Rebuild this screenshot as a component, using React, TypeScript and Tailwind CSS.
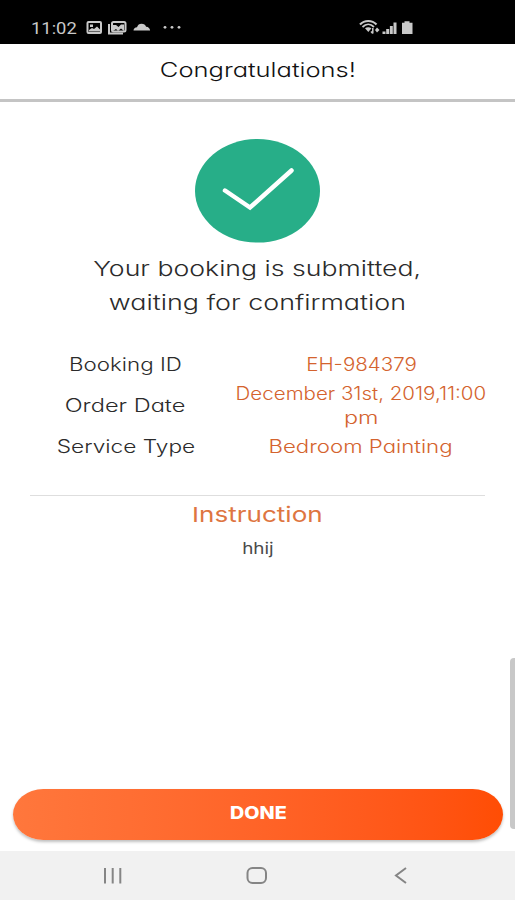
import clsx from "clsx";
import type { ReactNode } from "react";

const details = [
    {
        label: "Booking ID",
        labelClass: "scale-x-[1.24]",
        rowClass: "h-[34px]",
        value: [{ text: "EH-984379", className: "scale-x-[1.14]" }],
    },
    {
        label: "Order Date",
        labelClass: "scale-x-[1.31]",
        rowClass: "h-12",
        value: [
            { text: "December 31st, 2019,11:00", className: "scale-x-[1.14]" },
            { text: "pm", className: "scale-x-[1.3]" },
        ],
    },
    {
        label: "Service Type",
        labelClass: "scale-x-[1.26]",
        rowClass: "h-[34px]",
        value: [{ text: "Bedroom Painting", className: "scale-x-[1.235]" }],
    },
];

const Wide = ({
    className,
    children,
}: {
    className?: string;
    children: ReactNode;
}) => (
    <span className={clsx("inline-block whitespace-nowrap", className)}>
        {children}
    </span>
);

const StatusBar = () => (
    <div className="flex h-11 items-start bg-black pt-[18px] pl-[31px] text-[#c9c9c9]">
        <span className="w-[55px] font-[Roboto] text-[17px] leading-5 font-normal">
            <Wide className="origin-left scale-x-[1.08]">11:02</Wide>
        </span>
        <svg
            className="mt-[3px]"
            width="96"
            height="14"
            viewBox="0 0 96 14"
            fill="none"
            stroke="currentColor"
        >
            <rect x="1.500" y="1" width="13.500" height="11" rx="1" strokeWidth="2" />
            <path d="M3 10.500V9l3-2 2 1L11 5.500l3 3v2z" fill="currentColor" stroke="none" />
            <path d="M4 3.500h3v2.500H4z" fill="currentColor" stroke="none" />
            <path d="M23 3v9.500h14" strokeWidth="2" />
            <rect x="26" y="1" width="13.500" height="9.500" rx="1.500" strokeWidth="2" />
            <path
                d="M27 10V4h3l2.500 2L35 3.500h3V10l-3-2.500-3 2.500-2-2z"
                fill="currentColor"
                stroke="none"
            />
            <path
                d="M47.500 9.500c0-2 1.500-3 3.500-3.200.8-2.500 2.300-3.600 4.500-3.600 2.400 0 4 1.300 4.600 3 2.300-.1 3.800 1.700 4 3.800z"
                fill="currentColor"
                stroke="none"
            />
            <g fill="currentColor" stroke="none">
                <circle cx="79" cy="6.300" r="1.400" />
                <circle cx="86" cy="6.300" r="1.400" />
                <circle cx="93" cy="6.300" r="1.400" />
            </g>
        </svg>
        <svg
            className="mt-px ml-[177px]"
            width="56"
            height="16"
            viewBox="0 0 56 16"
            fill="none"
            stroke="currentColor"
        >
            <path d="M1 5.500c4.500-4.700 12-4.700 16.500 0" strokeWidth="2.200" />
            <path d="M3.500 8c3.500-3.500 8-3.500 11.500 0" strokeWidth="1.800" />
            <path
                d="M6 9.200c1.800-1.400 4.500-1.400 6.500 0L9.300 13z"
                fill="currentColor"
                stroke="none"
            />
            <path d="M13.800 9v5.500M12 12.500l1.800 2" strokeWidth="1.500" />
            <path d="M18 8.500l2.500 2.500-2.500 2.500-2-2.500z" fill="currentColor" stroke="none" />
            <path
                d="M23.500 12.500h3V15h-3zM27.200 10h3v5h-3zM30.900 7h2.900v8h-2.900zM34.500 3.500h3V15h-3z"
                fill="currentColor"
                stroke="none"
            />
            <path
                d="M45.500 2.200h5v1.600h3V15H43V3.800h2.500z"
                fill="currentColor"
                stroke="none"
            />
        </svg>
    </div>
);

const NavigationBar = () => (
    <nav className="flex h-[49px] items-center bg-[#f1f1f1] pl-[103px] text-[#858585]">
        <svg width="20" height="18" viewBox="0 0 20 18" stroke="currentColor" strokeWidth="2">
            <path d="M2 1v15.500M9.700 1v15.500M17.300 1v15.500" />
        </svg>
        <svg
            className="ml-[122px]"
            width="22"
            height="18"
            viewBox="0 0 22 18"
            fill="none"
            stroke="currentColor"
            strokeWidth="2"
        >
            <rect x="2.500" y="1" width="18.500" height="15" rx="5" />
        </svg>
        <svg
            className="ml-[127px]"
            width="14"
            height="18"
            viewBox="0 0 14 18"
            fill="none"
            stroke="currentColor"
            strokeWidth="2"
        >
            <path d="M12 1 2 8.500l10 7.500" />
        </svg>
    </nav>
);

export default function App() {
    return (
        <div className="relative flex h-[900px] w-[515px] flex-col overflow-hidden bg-white font-[Inter,sans-serif] font-light text-[#2b2b2b] [font-feature-settings:'cv11']">
            <StatusBar />
            <header className="flex h-[58px] items-center justify-center border-b-3 border-[#c4c4c4] pb-[3px] text-xl text-[#111]">
                <Wide className="scale-x-[1.275]">Congratulations!</Wide>
            </header>

            <main className="flex flex-1 flex-col items-center pt-[37px]">
                <svg width="126" height="104" viewBox="0 0 126 104" fill="none">
                    <ellipse cx="62.500" cy="51.800" rx="62.500" ry="51.800" fill="#27ae88" />
                    <path
                        d="M30 51.500 55 68.500 96.500 31.500"
                        stroke="#fff"
                        strokeWidth="4.500"
                        strokeLinecap="round"
                    />
                </svg>
                <h1 className="mt-[9px] flex flex-col items-center text-[20.5px] leading-[34px]">
                    <Wide className="scale-x-[1.3]">Your booking is submitted,</Wide>
                    <Wide className="scale-x-[1.31]">waiting for confirmation</Wide>
                </h1>

                <dl className="mt-7 w-full pr-[44px] text-[18px] leading-6">
                    {details.map(item => (
                        <div
                            key={item.label}
                            className={clsx("flex items-center", item.rowClass)}
                        >
                            <dt className="w-[251px] text-center">
                                <Wide className={item.labelClass}>{item.label}</Wide>
                            </dt>
                            <dd className="flex flex-1 flex-col items-center text-[#d4632e]">
                                {item.value.map(line => (
                                    <Wide key={line.text} className={line.className}>
                                        {line.text}
                                    </Wide>
                                ))}
                            </dd>
                        </div>
                    ))}
                </dl>

                <section className="mt-[31px] flex w-[455px] flex-col items-center border-t border-[#dedede]">
                    <h2 className="mt-0.5 text-[20.5px] leading-[34px] font-normal text-[#de7541]">
                        <Wide className="scale-x-[1.27]">Instruction</Wide>
                    </h2>
                    <p className="mt-[3px] text-[15.5px] leading-7 font-normal text-[#4a4a4a]">
                        <Wide className="scale-x-[1.22]">hhij</Wide>
                    </p>
                </section>

                <button className="mt-auto mb-[11px] h-[51px] w-[490px] bg-linear-to-r from-[#ff773c] to-[#ff4d04] pb-0.5 text-[17px] font-extrabold text-white shadow-[0_2px_3px_rgba(0,0,0,0.25)] [border-radius:31px/26px]">
                    <Wide className="translate-x-px scale-x-[1.16]">DONE</Wide>
                </button>
            </main>

            <NavigationBar />
            <div className="absolute top-[658px] right-0 h-[171px] w-[5px] rounded-l-[4px] bg-[#c8c8c8]" />
        </div>
    );
}
